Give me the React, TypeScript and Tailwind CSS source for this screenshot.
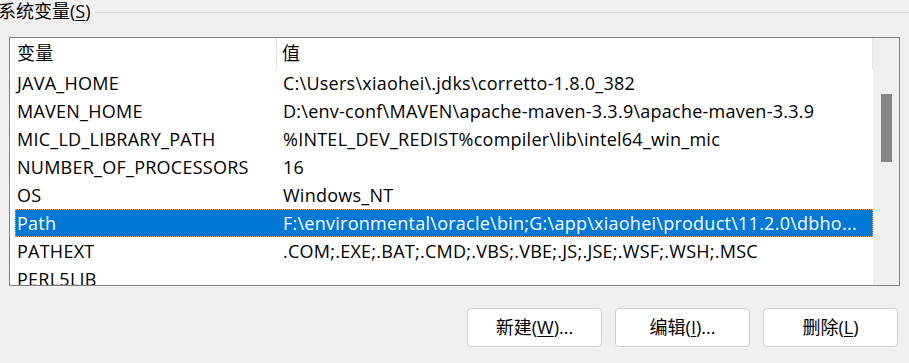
import React from "react";

const rows: [string, string][] = [
  ["JAVA_HOME", "C:\\Users\\xiaohei\\.jdks\\corretto-1.8.0_382"],
  ["MAVEN_HOME", "D:\\env-conf\\MAVEN\\apache-maven-3.3.9\\apache-maven-3.3.9"],
  ["MIC_LD_LIBRARY_PATH", "%INTEL_DEV_REDIST%compiler\\lib\\intel64_win_mic"],
  ["NUMBER_OF_PROCESSORS", "16"],
  ["OS", "Windows_NT"],
  ["Path", "F:\\environmental\\oracle\\bin;G:\\app\\xiaohei\\product\\11.2.0\\dbho..."],
  ["PATHEXT", ".COM;.EXE;.BAT;.CMD;.VBS;.VBE;.JS;.JSE;.WSF;.WSH;.MSC"],
  ["PERL5LIB", ""],
];

function Btn({ label, k, tail }: { label: string; k: string; tail?: string }) {
  return (
    <button className="w-[135px] h-[39px] rounded-[4px] border border-[#d0d0d0] bg-white text-[18px] text-black flex items-center justify-center">
      {label}(<u className="underline-offset-2">{k}</u>){tail}
    </button>
  );
}

export default function App() {
  return (
    <div
      className="w-[909px] h-[363px] bg-[#f0f0f0] overflow-hidden text-black"
      style={{ fontFamily: '"Open Sans", "Noto Sans CJK SC", sans-serif' }}
    >
      {/* group title */}
      <div className="flex items-center h-[22px] -ml-[2px]">
        <span className="text-[18px] leading-none whitespace-nowrap">
          系统变量(<u className="underline-offset-2">S</u>)
        </span>
        <div className="flex-1 h-px bg-[#dcdcdc] ml-[3px] mt-[2px]" />
      </div>

      {/* list view */}
      <div className="ml-[9px] mt-[15px] w-[891px] h-[249px] border border-[#828282] bg-white flex overflow-hidden">
        <div className="flex-1 flex flex-col text-[18px] tracking-[0.25px]">
          <div className="h-[31px] flex shrink-0">
            <div className="w-[267px] pl-[7px] flex items-center border-r border-[#e5e5e5]">变量</div>
            <div className="flex-1 pl-[5px] flex items-center border-r border-[#e5e5e5]">值</div>
          </div>
          {rows.map(([n, v]) => {
            const sel = n === "Path";
            return (
              <div
                key={n}
                className={
                  "h-[28px] shrink-0 flex items-center ml-[5px] " +
                  (sel ? "bg-[#0078d7] text-white outline outline-1 outline-dotted outline-[#e8a050] -outline-offset-1" : "")
                }
              >
                <div className="w-[268px] pl-[2px] whitespace-nowrap">{n}</div>
                <div className="flex-1 whitespace-nowrap overflow-hidden">{v}</div>
              </div>
            );
          })}
        </div>
        {/* scrollbar */}
        <div className="w-[26px] shrink-0 bg-[#f0f0f0] pt-[56px] pl-[8px]">
          <div className="w-[11px] h-[68px] bg-[#858585]" />
        </div>
      </div>

      {/* buttons */}
      <div className="flex gap-[13px] ml-[467px] mt-[22px]">
        <Btn label="新建" k="W" tail="..." />
        <Btn label="编辑" k="I" tail="..." />
        <Btn label="删除" k="L" />
      </div>
    </div>
  );
}
